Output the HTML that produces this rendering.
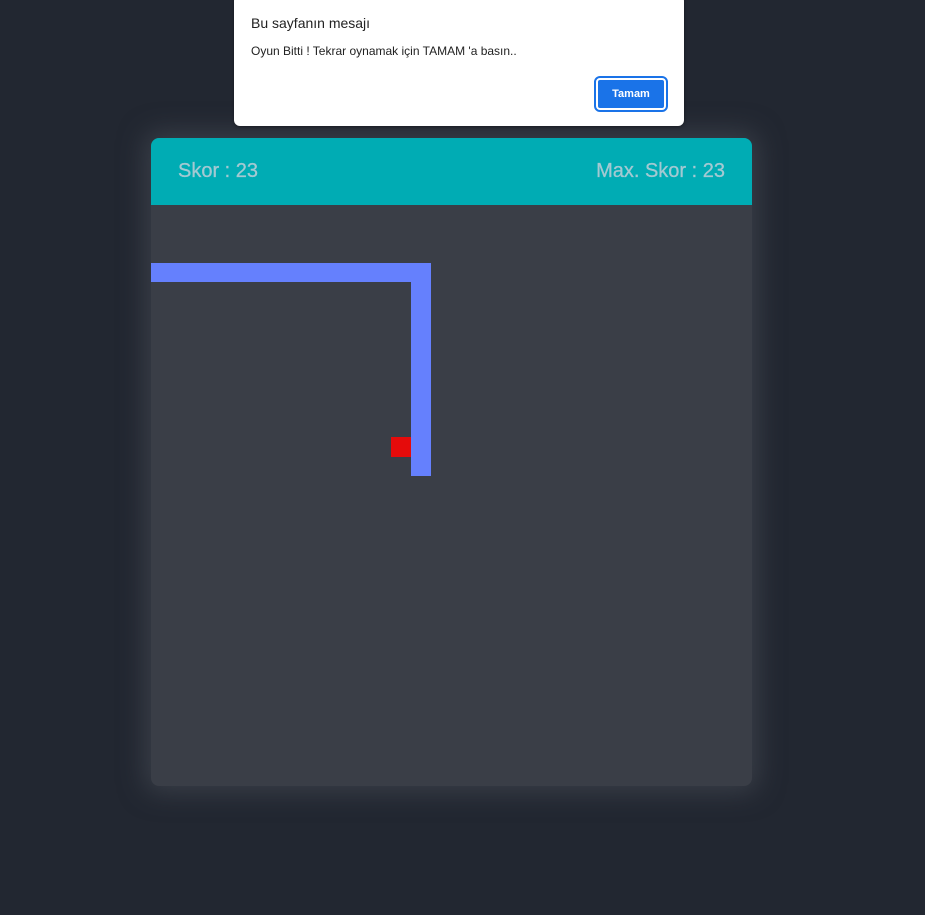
<!DOCTYPE html>
<html><head><style>
body{margin:0;width:925px;height:915px;background:#222731;position:relative;overflow:hidden;font-family:"Liberation Sans",sans-serif}
.card{position:absolute;left:151px;top:138px;width:601px;height:648px;background:#3a3e47;border-radius:8px;box-shadow:0 0 26px 6px rgba(70,75,85,.65);overflow:hidden}
.hd{height:67px;background:#00acb4;color:#a3c9d2;font-size:20px;position:relative}
.hd span{position:absolute;top:22px;-webkit-text-stroke:0.3px #a3c9d2}
.s{position:absolute;background:#6580fd}
.dlg{position:absolute;left:234px;top:-5px;width:450px;height:131px;background:#fff;border-radius:6px;box-shadow:0 1px 3px rgba(0,0,0,.4)}
.t{position:absolute;left:17px;top:20px;font-size:14px;color:#222}
.m{position:absolute;left:17px;top:49px;font-size:12px;color:#222}
.b{position:absolute;left:362px;top:83px;border:2px solid #fff;outline:2px solid #1a73e8;background:#1a73e8;border-radius:4px;color:#fff;font-size:11px;font-weight:bold;text-align:center;line-height:28px;width:66px;height:28px}
</style></head><body>
<div class="card"><div class="hd"><span style="left:27px">Skor : 23</span><span style="right:27px">Max. Skor : 23</span></div></div>
<div class="s" style="left:151px;top:263px;width:280px;height:19px"></div>
<div class="s" style="left:411px;top:263px;width:20px;height:213px"></div>
<div style="position:absolute;left:391px;top:437px;width:20px;height:20px;background:#e50b0b"></div>
<div class="dlg"><div class="t">Bu sayfanın mesajı</div><div class="m">Oyun Bitti ! Tekrar oynamak için TAMAM 'a basın..</div><div class="b">Tamam</div></div>
</body></html>
